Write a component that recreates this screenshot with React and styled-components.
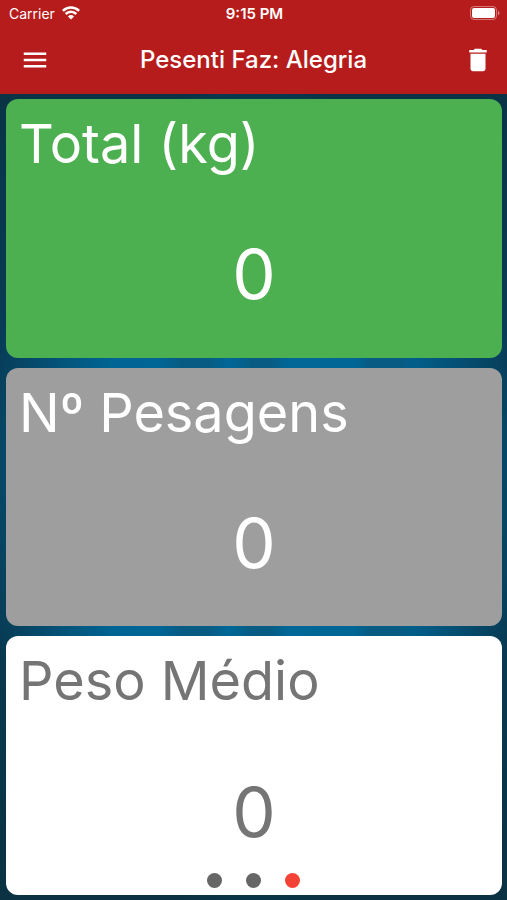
import React, { useState } from 'react';
import styled, { createGlobalStyle } from 'styled-components';
import { MdMenu, MdDelete } from 'react-icons/md';

const cards = [
  { id: 'total', title: 'Total (kg)', value: 0, background: '#4caf50', color: '#ffffff' },
  { id: 'count', title: 'Nº Pesagens', value: 0, background: '#9e9e9e', color: '#ffffff' },
  { id: 'average', title: 'Peso Médio', value: 0, background: '#ffffff', color: '#757575' }
];

const pages = ['Lotes', 'Pesagem', 'Resumo'];

const WifiIcon = () => (
  <svg width="18" height="14" viewBox="0 0 18 14" fill="none" stroke="#fff" strokeWidth="2.5" aria-hidden="true">
    <path d="M0.9 4.9a11.5 11.5 0 0 1 16.2 0" />
    <path d="M3.7 8a7.5 7.5 0 0 1 10.6 0" />
    <path d="M9 13.6 5.9 10.4a4.5 4.5 0 0 1 6.2 0Z" fill="#fff" stroke="none" />
  </svg>
);

const BatteryIcon = () => (
  <svg width="30" height="14" viewBox="0 0 30 14" aria-hidden="true">
    <rect x="0.5" y="0.5" width="26" height="13" rx="3.5" fill="none" stroke="#fff" strokeOpacity="0.4" />
    <rect x="2" y="2" width="23" height="10" rx="2" fill="#fff" />
    <path d="M28 4.7c1.8 0.6 1.8 4 0 4.6Z" fill="#fff" fillOpacity="0.5" />
  </svg>
);

const App = () => {
  const [page, setPage] = useState(2);

  return (
    <>
      <GlobalStyle />
      <SCScreen>
        <SCHeader>
          <SCStatusBar>
            <SCCarrier>
              Carrier
              <WifiIcon />
            </SCCarrier>
            <SCTime>9:15 PM</SCTime>
            <SCBattery>
              <BatteryIcon />
            </SCBattery>
          </SCStatusBar>
          <SCToolbar>
            <SCMenuButton type="button" aria-label="Menu">
              <MdMenu size={30} />
            </SCMenuButton>
            <SCTitle>Pesenti Faz: Alegria</SCTitle>
            <SCDeleteButton type="button" aria-label="Excluir">
              <MdDelete size={30} />
            </SCDeleteButton>
          </SCToolbar>
        </SCHeader>
        <SCCards>
          {cards.map(({ id, title, value, background, color }) => (
            <SCCard key={id} $background={background} $color={color}>
              <SCCardTitle>{title}</SCCardTitle>
              <SCCardValue>{value}</SCCardValue>
            </SCCard>
          ))}
        </SCCards>
        <SCDots>
          {pages.map((label, index) => (
            <SCDot
              key={label}
              type="button"
              aria-label={label}
              $active={index === page}
              onClick={() => setPage(index)}
            />
          ))}
        </SCDots>
      </SCScreen>
    </>
  );
};

const GlobalStyle = createGlobalStyle`
  * {
    box-sizing: border-box;
  }
  body {
    margin: 0;
    font-family: Inter, 'Liberation Sans', sans-serif;
  }
  h1, h2, p {
    margin: 0;
    font-weight: 400;
  }
`;

const SCScreen = styled.div`
  position: relative;
  display: flex;
  flex-direction: column;
  min-height: 100vh;
  background:
    linear-gradient(
      90deg,
      transparent 31%,
      #085b82 36%,
      #085b82 41%,
      transparent 45%,
      #085b82 50%,
      #085b82 53%,
      transparent 57%,
      transparent 70%,
      #085b82 73%,
      #085b82 79%,
      transparent 82%
    ) center 59% / 100% 340px no-repeat,
    radial-gradient(ellipse 54% 46% at 50% 55%, #006a9c 0%, #006594 60%, transparent 100%),
    linear-gradient(#0b3140, #073f5c 50%, #0a3242);
`;

const SCHeader = styled.header`
  padding-bottom: 8px;
  background: #b71c1c;
  color: #fff;
`;

const SCStatusBar = styled.div`
  display: grid;
  grid-template-columns: 1fr auto 1fr;
  align-items: center;
  height: 26px;
  padding: 0 7px 0 9px;
  font-size: 14px;
`;

const SCCarrier = styled.span`
  display: flex;
  align-items: center;
  gap: 7px;
`;

const SCTime = styled.span`
  font-size: 15px;
  font-weight: 600;
`;

const SCBattery = styled.span`
  display: flex;
  justify-content: flex-end;
`;

const SCToolbar = styled.div`
  display: grid;
  grid-template-columns: 1fr auto 1fr;
  align-items: center;
  height: 60px;
  padding: 7px 14px 0;
`;

const SCIconButton = styled.button`
  display: flex;
  padding: 0;
  border: 0;
  background: none;
  color: inherit;
  cursor: pointer;
`;

const SCMenuButton = styled(SCIconButton)`
  justify-self: start;
  padding-left: 6px;
`;

const SCDeleteButton = styled(SCIconButton)`
  justify-self: end;
`;

const SCTitle = styled.h1`
  font-size: 24px;
  font-weight: 500;
`;

const SCCards = styled.main`
  display: flex;
  flex: 1;
  flex-direction: column;
  gap: 10px;
  padding: 5px 5px 5px 6px;
`;

const SCCard = styled.section`
  display: flex;
  flex: 1;
  flex-direction: column;
  padding: 12px 13px 0;
  border-radius: 12px;
  background: ${({ $background }) => $background};
  color: ${({ $color }) => $color};
`;

const SCCardTitle = styled.h2`
  font-size: 54px;
  line-height: 66px;
`;

const SCCardValue = styled.p`
  display: flex;
  flex: 1;
  align-items: center;
  justify-content: center;
  padding-top: 14px;
  font-size: 69px;
  line-height: 84px;
`;

const SCDots = styled.nav`
  position: absolute;
  right: 0;
  bottom: 12px;
  left: 0;
  display: flex;
  justify-content: center;
  gap: 24px;
`;

const SCDot = styled.button`
  width: 15px;
  height: 15px;
  padding: 0;
  border: 0;
  border-radius: 50%;
  background: ${({ $active }) => ($active ? '#f44336' : '#666666')};
  cursor: pointer;
`;

export default App;
